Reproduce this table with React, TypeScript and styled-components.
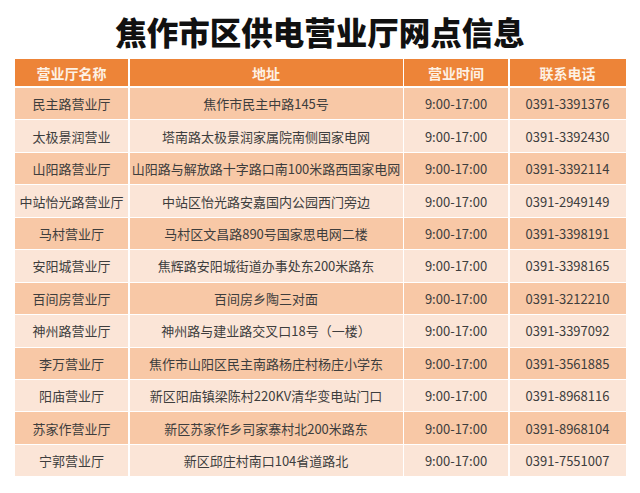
import React from 'react';
import styled, { createGlobalStyle } from 'styled-components';

const GlobalStyle = createGlobalStyle`
    html, body {
        margin: 0;
        padding: 0;
        background: #ffffff;
    }
    body {
        font-family: "Noto Sans CJK SC", "Noto Sans", sans-serif;
    }
`;

const Page = styled.div`
    width: 640px;
    height: 493px;
    padding: 8px 15px 0 15px;
    box-sizing: border-box;
    display: flex;
    flex-direction: column;
    align-items: stretch;
`;

const Title = styled.h1`
    margin: 0;
    height: 46px;
    display: flex;
    align-items: center;
    justify-content: center;
    font-size: 31.5px;
    font-weight: 900;
    color: #111111;
`;

const Table = styled.div`
    margin-top: 5px;
    display: grid;
    grid-template-columns: 113px 273px 104px 116px;
    grid-template-rows: 28px;
    grid-auto-rows: 31.45px;
    column-gap: 1.5px;
    row-gap: 1px;
    width: 610px;
`;

const HeadCell = styled.div`
    background: #ed8438;
    color: #fdf1e4;
    font-size: 14px;
    font-weight: 700;
    display: flex;
    align-items: center;
    justify-content: center;
    margin-bottom: 1px;
`;

const Cell = styled.div<{ $odd: boolean }>`
    background: ${(p) => (p.$odd ? '#f8c8a6' : '#fbe5d7')};
    color: #3d3d3d;
    font-size: 13px;
    display: flex;
    align-items: center;
    justify-content: center;
    white-space: nowrap;
`;

const rows: [string, string, string][] = [
    ['民主路营业厅', '焦作市民主中路145号', '0391-3391376'],
    ['太极景润营业', '塔南路太极景润家属院南侧国家电网', '0391-3392430'],
    ['山阳路营业厅', '山阳路与解放路十字路口南100米路西国家电网', '0391-3392114'],
    ['中站怡光路营业厅', '中站区怡光路安嘉国内公园西门旁边', '0391-2949149'],
    ['马村营业厅', '马村区文昌路890号国家思电网二楼', '0391-3398191'],
    ['安阳城营业厅', '焦辉路安阳城街道办事处东200米路东', '0391-3398165'],
    ['百间房营业厅', '百间房乡陶三对面', '0391-3212210'],
    ['神州路营业厅', '神州路与建业路交叉口18号（一楼）', '0391-3397092'],
    ['李万营业厅', '焦作市山阳区民主南路杨庄村杨庄小学东', '0391-3561885'],
    ['阳庙营业厅', '新区阳庙镇梁陈村220KV清华变电站门口', '0391-8968116'],
    ['苏家作营业厅', '新区苏家作乡司家寨村北200米路东', '0391-8968104'],
    ['宁郭营业厅', '新区邱庄村南口104省道路北', '0391-7551007'],
];

const headers = ['营业厅名称', '地址', '营业时间', '联系电话'];

export default function App() {
    return (
        <>
            <GlobalStyle />
            <Page>
                <Title>焦作市区供电营业厅网点信息</Title>
                <Table>
                    {headers.map((h) => (
                        <HeadCell key={h}>{h}</HeadCell>
                    ))}
                    {rows.map(([name, addr, phone], i) => (
                        <React.Fragment key={name}>
                            <Cell $odd={i % 2 === 0}>{name}</Cell>
                            <Cell $odd={i % 2 === 0}>{addr}</Cell>
                            <Cell $odd={i % 2 === 0}>9:00-17:00</Cell>
                            <Cell $odd={i % 2 === 0}>{phone}</Cell>
                        </React.Fragment>
                    ))}
                </Table>
            </Page>
        </>
    );
}
